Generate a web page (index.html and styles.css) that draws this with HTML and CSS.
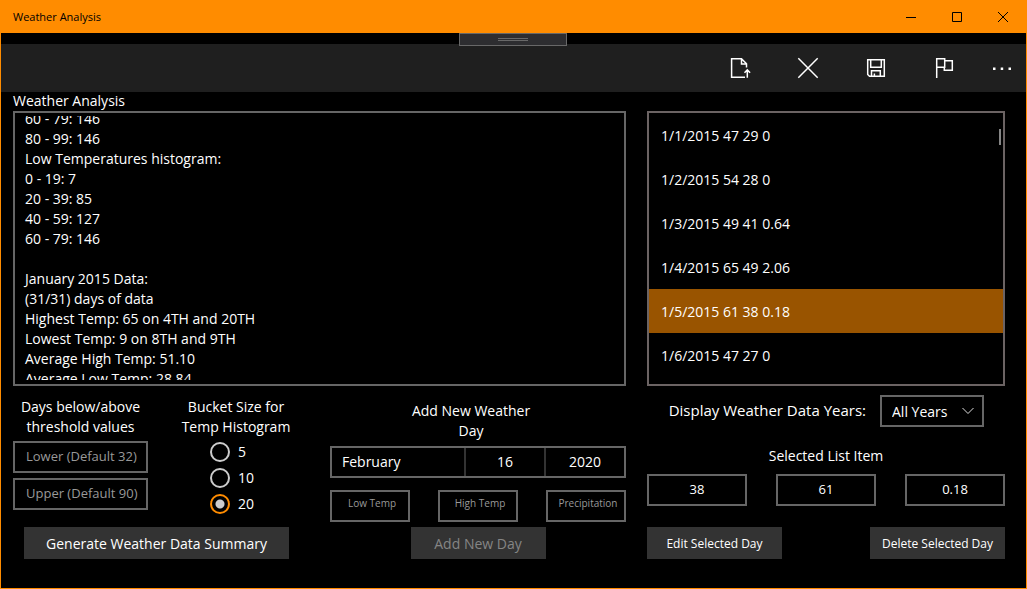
FILE: index.html
```html
<!DOCTYPE html>
<html lang="en">
<head>
<meta charset="utf-8">
<meta name="viewport" content="width=device-width, initial-scale=1">
<title>Weather Analysis</title>
<link rel="stylesheet" href="styles.css">
</head>
<body>
<div class="window">
  <header class="titlebar">
    <span class="titlebar-name">Weather Analysis</span>
    <button class="caption-button" aria-label="Minimize"><svg width="10" height="10" viewBox="0 0 10 10"><path d="M0 5.5h10"/></svg></button>
    <button class="caption-button" aria-label="Maximize"><svg width="10" height="10" viewBox="0 0 10 10"><path d="M.5.5h9v9h-9z"/></svg></button>
    <button class="caption-button" aria-label="Close"><svg width="10" height="10" viewBox="0 0 10 10"><path d="M0 0l10 10M10 0L0 10"/></svg></button>
  </header>
  <button class="debug-handle" aria-label="Expand toolbar"><span class="grip"></span></button>

  <nav class="commandbar">
    <button class="command" aria-label="Open file"><svg width="20" height="20" viewBox="0 0 20 20"><path d="M15 19.300H1.600V.7H11.500l5 5V9.500M11.500.7v5.200h5.200M17.300 19.700v-7.400M14.500 14.700l2.800-2.800 2.800 2.800"/></svg></button>
    <button class="command" aria-label="Clear"><svg width="20" height="20" viewBox="0 0 20 20"><path d="M.3.3l19.400 19.400M19.700.3L.3 19.700"/></svg></button>
    <button class="command" aria-label="Save"><svg width="20" height="20" viewBox="0 0 20 20"><path d="M1.700 1.700h16.600v16.600H3.500l-1.800-1.800zM4.700 1.700v7.600h10.600V1.700M5.500 18.300v-5.600h8.800v5.600M8.400 18.300v-2.700"/></svg></button>
    <button class="command" aria-label="Flag"><svg width="20" height="20" viewBox="0 0 20 20"><path d="M2.700 20V.7h8v8.600h-8M10.700 2.800h7.600v9.500h-8v-3"/></svg></button>
    <button class="command command-more" aria-label="More"><svg width="20" height="20" viewBox="0 0 20 20"><path class="dot" d="M1 9.500h2.500v2.500H1zM8.700 9.500h2.500v2.500H8.700zM16.500 9.500h2.500v2.500h-2.500z"/></svg></button>
  </nav>

  <main class="page">
    <label class="page-title" for="summary">Weather Analysis</label>
    <div class="columns">
      <section class="column">
        <div class="summary-box">
          <textarea class="summary" id="summary" readonly>60 - 79: 146
80 - 99: 146
Low Temperatures histogram:
0 - 19: 7
20 - 39: 85
40 - 59: 127
60 - 79: 146

January 2015 Data:
(31/31) days of data
Highest Temp: 65 on 4TH and 20TH
Lowest Temp: 9 on 8TH and 9TH
Average High Temp: 51.10
Average Low Temp: 28.84</textarea>
        </div>
        <div class="forms">
          <form class="options">
            <div class="option-columns">
              <div class="thresholds">
                <div class="heading">Days below/above threshold values</div>
                <input class="field" type="text" placeholder="Lower (Default 32)" aria-label="Lower threshold">
                <input class="field" type="text" placeholder="Upper (Default 90)" aria-label="Upper threshold">
              </div>
              <div class="buckets" role="radiogroup" aria-labelledby="bucket-label">
                <div class="heading" id="bucket-label">Bucket Size for Temp Histogram</div>
                <div class="radios">
                  <label class="radio"><input type="radio" name="bucket">5</label>
                  <label class="radio"><input type="radio" name="bucket">10</label>
                  <label class="radio"><input type="radio" name="bucket" checked>20</label>
                </div>
              </div>
            </div>
            <button class="button generate" type="button">Generate Weather Data Summary</button>
          </form>
          <form class="new-day">
            <div class="heading new-day-title">Add New Weather Day</div>
            <button class="datepicker" type="button">
              <span class="month">February</span><span class="day">16</span><span class="year">2020</span>
            </button>
            <div class="row">
              <input class="field small" type="text" placeholder="Low Temp" aria-label="Low Temp">
              <input class="field small" type="text" placeholder="High Temp" aria-label="High Temp">
              <input class="field small" type="text" placeholder="Precipitation" aria-label="Precipitation">
            </div>
            <button class="button add-day" type="button" disabled>Add New Day</button>
          </form>
        </div>
      </section>

      <section class="column">
        <div class="list-box">
          <ul class="days">
            <li class="day-item">1/1/2015 47 29 0</li>
            <li class="day-item">1/2/2015 54 28 0</li>
            <li class="day-item">1/3/2015 49 41 0.64</li>
            <li class="day-item">1/4/2015 65 49 2.06</li>
            <li class="day-item selected">1/5/2015 61 38 0.18</li>
            <li class="day-item">1/6/2015 47 27 0</li>
          </ul>
          <span class="scroll-thumb"></span>
        </div>
        <form class="selection">
          <div class="years">
            <label class="years-label" for="years">Display Weather Data Years:</label>
            <span class="select-wrap">
              <select class="select" id="years"><option>All Years</option></select>
              <svg class="chevron" width="12" height="8" viewBox="0 0 12 8"><path d="M.5 1L6 6.500 11.500 1"/></svg>
            </span>
          </div>
          <div class="selected-title">Selected List Item</div>
          <div class="row">
            <input class="field value" type="text" value="38" aria-label="Selected low temperature">
            <input class="field value" type="text" value="61" aria-label="Selected high temperature">
            <input class="field value" type="text" value="0.18" aria-label="Selected precipitation">
          </div>
          <div class="row actions">
            <button class="button compact" type="button">Edit Selected Day</button>
            <button class="button compact" type="button">Delete Selected Day</button>
          </div>
        </form>
      </section>
    </div>
  </main>
</div>
<script src="script.js"></script>
</body>
</html>
```
FILE: styles.css
```css
* { box-sizing: border-box; }

body {
  margin: 0;
  background: #000;
  color: #fff;
  font: 14px/20px "Open Sans", "Noto Sans", sans-serif;
}

button, input, select, textarea {
  margin: 0;
  border-radius: 0;
  color: inherit;
  font: inherit;
}

svg { display: block; fill: none; stroke: currentColor; }

.window {
  position: relative;
  display: flex;
  flex-direction: column;
  min-height: 100vh;
  border: 1px solid #ff8c00;
  border-top: 0;
}

.titlebar {
  display: flex;
  align-items: stretch;
  height: 33px;
  padding-left: 12px;
  background: #ff8c00;
  color: #000;
  font-size: 11px;
}
.titlebar-name { flex: 1; align-self: center; }
.caption-button {
  display: grid;
  place-items: center;
  width: 46px;
  padding: 0;
  border: 0;
  background: none;
}

.debug-handle {
  position: absolute;
  top: 33px;
  left: 50%;
  display: grid;
  place-items: center;
  width: 108px;
  height: 13px;
  margin-left: -55px;
  padding: 0;
  border: 1px solid #686868;
  background: #2d2d30;
}
.grip {
  width: 30px;
  height: 3px;
  border: solid #686868;
  border-width: 1px 0;
}

.commandbar {
  display: flex;
  justify-content: flex-end;
  height: 48px;
  margin-top: 11px;
  background: #1f1f1f;
}
.command {
  display: grid;
  place-items: center;
  width: 68px;
  padding: 0;
  border: 0;
  background: none;
}
.command svg { overflow: visible; stroke-width: 1.5; }
.command-more { width: 48px; }
.dot { fill: #fff; stroke: none; }

.page {
  display: flex;
  flex: 1;
  flex-direction: column;
  padding: 0 21px 29px 12px;
}
.page-title { height: 19px; line-height: 18px; }

.columns {
  display: grid;
  flex: 1;
  grid-template-columns: 613fr 358fr;
  gap: 21px;
}
.column { display: flex; flex-direction: column; min-width: 0; }

.summary-box, .list-box {
  display: flex;
  flex: 1;
  min-height: 275px;
  border: 2px solid #666;
}
.summary-box { padding: 3px 0 4px; }
.summary {
  flex: 1;
  height: 264px;
  min-height: 100%;
  padding: 0 10px;
  border: 0;
  outline: 0;
  background: none;
  resize: none;
  scrollbar-width: none;
}

.list-box { position: relative; border-color: #6b6363; }
.days { flex: 1; margin: 0; padding: 0; list-style: none; }
.day-item { padding: 13px 12px 11px; }
.selected { background: #995400; }
.scroll-thumb {
  position: absolute;
  top: 16px;
  right: 2px;
  width: 2px;
  height: 16px;
  background: #858585;
}

.forms {
  display: flex;
  justify-content: space-between;
  height: 173px;
  padding-top: 11px;
}
.heading { text-align: center; }
.row { display: flex; justify-content: space-between; }

.options { display: flex; flex-direction: column; justify-content: space-between; }
.option-columns { display: flex; gap: 28px; }
.thresholds {
  display: flex;
  flex-direction: column;
  gap: 5px;
  width: 135px;
}
.thresholds .heading { margin-bottom: -1px; }
.buckets { width: 120px; }

.field {
  height: 32px;
  padding: 0 10px 2px;
  border: 2px solid #666;
  outline: 0;
  background: #000;
  font-size: 13px;
}
.field::placeholder { color: #999; opacity: 1; }
.thresholds .field { width: 100%; padding-right: 4px; padding-left: 11px; }
.field.small {
  width: 80px;
  padding: 0 0 6px 4px;
  font-size: 10px;
  text-align: center;
}
.field.value { width: 100px; text-align: center; }

.radios { padding: 5px 0 0 34px; }
.radio { display: flex; align-items: center; gap: 8px; height: 20px; margin-bottom: 6px; }
.radio input {
  appearance: none;
  width: 20px;
  height: 20px;
  border: 2px solid #ccc;
  border-radius: 50%;
}
.radio input:checked {
  border-color: #ff8c00;
  background: radial-gradient(circle, #ccc 4px, transparent 5px);
}

.button {
  height: 32px;
  padding: 2px 0 0;
  border: 0;
  background: #333;
}
.button:disabled { color: #858585; }
.generate { width: 265px; margin-left: 11px; }
.compact { width: 135px; font-size: 12px; }

.new-day { display: flex; flex-direction: column; width: 296px; padding-top: 4px; }
.new-day-title { width: 140px; margin: 0 auto; padding-right: 14px; box-sizing: content-box; }
.datepicker {
  display: grid;
  grid-template-columns: 134px 80px 1fr;
  height: 32px;
  margin: 5px 0 12px;
  padding: 0;
  border: 2px solid #666;
  background: none;
  line-height: 28px;
}
.month { padding-left: 10px; border-right: 2px solid #333; text-align: left; }
.day { border-right: 2px solid #333; }
.add-day { width: 135px; margin: auto auto 0; }

.selection { display: flex; flex-direction: column; height: 173px; padding-top: 9px; }
.years { display: flex; justify-content: flex-end; gap: 14px; padding-right: 21px; line-height: 30px; }
.years-label { font-size: 15px; }
.select-wrap { position: relative; }
.select {
  display: block;
  appearance: none;
  width: 104px;
  height: 32px;
  padding: 0 10px;
  border: 2px solid #666;
  background: #000;
}
.chevron { position: absolute; top: 12px; right: 10px; color: #ddd; pointer-events: none; }
.selected-title { margin: 19px 0 8px; text-align: center; }
.actions { margin-top: auto; }
```
FILE: script.js
```js
document.getElementById('summary').scrollTop = 7;
```
